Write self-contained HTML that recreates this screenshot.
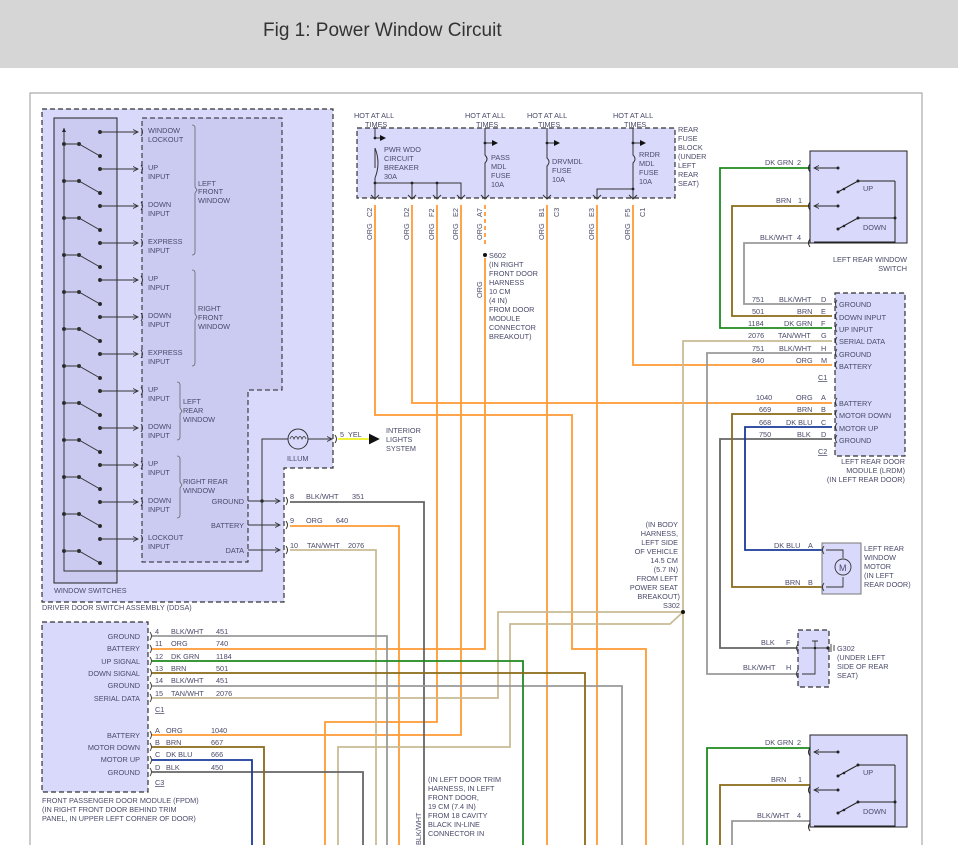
<!DOCTYPE html>
<html><head><meta charset="utf-8"><style>
html,body{margin:0;padding:0;background:#fff;width:958px;height:845px;overflow:hidden}
.hdr{position:absolute;left:0;top:0;width:958px;height:68px;background:#d6d6d6}
.hdr span{position:absolute;left:263px;top:20px;font:19px "Liberation Sans",sans-serif;color:#333}
svg{position:absolute;left:0;top:0}
text{font-family:"Liberation Sans",sans-serif;font-size:7.3px;fill:#4a4a6a}
</style></head><body>
<div class="hdr"><span>Fig 1: Power Window Circuit</span></div>
<svg width="958" height="845" viewBox="0 0 958 845">
<defs><marker id="ar" markerWidth="6" markerHeight="6" refX="5" refY="3" orient="auto"><path d="M0,0.5 L5,3 L0,5.5" fill="none" stroke="#333" stroke-width="0.9"/></marker>
<marker id="af" markerWidth="6" markerHeight="6" refX="5" refY="3" orient="auto"><path d="M0,0 L6,3 L0,6z" fill="#111"/></marker></defs>
<!-- frame -->
<path d="M30,845 V93 H922 V845" fill="none" stroke="#aaa" stroke-width="1.2"/>

<!-- DDSA -->
<path d="M42,109 H333 V468 H284 V602 H42 Z" fill="#d9d9fb" stroke="#333" stroke-width="1.2" stroke-dasharray="5,3"/>
<rect x="54" y="118" width="63" height="465" fill="#cbcbf2" stroke="#222" stroke-width="1"/>
<path d="M142,118 H282 V390 H248 V562 H142 Z" fill="#cbcbf2" stroke="#222" stroke-width="1" stroke-dasharray="5,3"/>
<path d="M64,128 V571 H262 V439 H288" fill="none" stroke="#333" stroke-width="1"/>
<path d="M64,128 l-2,4 h4z" fill="#222"/>
<g stroke="#333" stroke-width="1" fill="#222">
<g id="sw"><circle cx="64" cy="144" r="1.5"/><circle cx="79" cy="144" r="1.5"/><path d="M64,144 H79 L100,156" fill="none"/><circle cx="100" cy="156" r="1.5"/>
<circle cx="100" cy="132" r="1.5"/><path d="M100,132 H138" fill="none" marker-end="url(#ar)"/><path d="M141,128 q3,4 0,8" fill="none"/></g>
<use href="#sw" y="37"/><use href="#sw" y="74"/><use href="#sw" y="111"/><use href="#sw" y="148"/><use href="#sw" y="185"/><use href="#sw" y="222"/><use href="#sw" y="259"/><use href="#sw" y="296"/><use href="#sw" y="333"/><use href="#sw" y="370"/><use href="#sw" y="407"/>
</g>
<g>
<text x="148" y="133">WINDOW</text><text x="148" y="142">LOCKOUT</text>
<text x="148" y="170">UP</text><text x="148" y="179">INPUT</text>
<text x="148" y="207">DOWN</text><text x="148" y="216">INPUT</text>
<text x="148" y="244">EXPRESS</text><text x="148" y="253">INPUT</text>
<text x="148" y="281">UP</text><text x="148" y="290">INPUT</text>
<text x="148" y="318">DOWN</text><text x="148" y="327">INPUT</text>
<text x="148" y="355">EXPRESS</text><text x="148" y="364">INPUT</text>
<text x="148" y="392">UP</text><text x="148" y="401">INPUT</text>
<text x="148" y="429">DOWN</text><text x="148" y="438">INPUT</text>
<text x="148" y="466">UP</text><text x="148" y="475">INPUT</text>
<text x="148" y="503">DOWN</text><text x="148" y="512">INPUT</text>
<text x="148" y="540">LOCKOUT</text><text x="148" y="549">INPUT</text>
<text x="198" y="186">LEFT</text><text x="198" y="194">FRONT</text><text x="198" y="203">WINDOW</text>
<text x="198" y="311">RIGHT</text><text x="198" y="320">FRONT</text><text x="198" y="329">WINDOW</text>
<text x="183" y="404">LEFT</text><text x="183" y="413">REAR</text><text x="183" y="422">WINDOW</text>
<text x="183" y="484">RIGHT REAR</text><text x="183" y="493">WINDOW</text>
<text x="244" y="504" text-anchor="end">GROUND</text><text x="244" y="528" text-anchor="end">BATTERY</text><text x="244" y="553" text-anchor="end">DATA</text>
<text x="54" y="593">WINDOW SWITCHES</text>
<text x="42" y="610">DRIVER DOOR SWITCH ASSEMBLY (DDSA)</text>
</g>
<g fill="none" stroke="#666" stroke-width="0.8">
<path d="M192,125 q3,0 3,3 V187 l2,3 l-2,3 V252 q0,3 -3,3"/>
<path d="M192,270 q3,0 3,3 V314 l2,3 l-2,3 V363 q0,3 -3,3"/>
<path d="M177,382 q3,0 3,3 V408 l2,3 l-2,3 V437 q0,3 -3,3"/>
<path d="M177,456 q3,0 3,3 V482 l2,3 l-2,3 V515 q0,3 -3,3"/>
</g>
<!-- illum -->
<circle cx="298" cy="439" r="10" fill="none" stroke="#333"/>
<path d="M290,439 q2,-5 4,0 q2,-5 4,0 q2,-5 4,0 q2,-5 4,0" fill="none" stroke="#333" stroke-width="0.8"/>
<path d="M308,439 H332" stroke="#333" marker-end="url(#ar)"/>
<path d="M335,435 q3,4 0,8" fill="none" stroke="#333"/>
<text x="287" y="461">ILLUM</text>
<text x="340" y="437">5</text><text x="348" y="437">YEL</text>
<path d="M338,439 H378" stroke="#eeee22" stroke-width="1.8" marker-end="url(#af)"/>
<text x="386" y="433">INTERIOR</text><text x="386" y="442">LIGHTS</text><text x="386" y="451">SYSTEM</text>
<!-- ddsa out pins -->
<g stroke="#333" stroke-width="1" fill="none">
<path d="M248,501 H280" marker-end="url(#ar)"/><circle cx="262" cy="501" r="1.3" fill="#222"/>
<path d="M248,525 H280" marker-end="url(#ar)"/><path d="M248,550 H280" marker-end="url(#ar)"/>
<path d="M286,497 q3,4 0,8 M286,521 q3,4 0,8 M286,546 q3,4 0,8"/>
</g>
<text x="290" y="499">8</text><text x="306" y="499">BLK/WHT</text><text x="352" y="499">351</text>
<text x="290" y="523">9</text><text x="306" y="523">ORG</text><text x="336" y="523">640</text>
<text x="290" y="548">10</text><text x="307" y="548">TAN/WHT</text><text x="348" y="548">2076</text>

<!-- wires -->
<g fill="none" stroke-width="1.8">
<!-- orange -->
<g stroke="#ff9a33">
<path d="M375,205 V415 H572 V649 H646 V845"/>
<path d="M412,205 V403 H832"/>
<path d="M437,205 V722 H325 V845"/>
<path d="M461,205 V735 H152"/>
<path d="M485,205 V245" stroke-dasharray="4,3"/>
<path d="M485,258 V649 H152"/>
<path d="M547,205 V845"/>
<path d="M597,205 V845"/>
<path d="M633,205 V365 H832"/>
<path d="M290,526 H399 V845"/>
</g>
<!-- tan -->
<g stroke="#c9bb95">
<path d="M290,550 H376 V845"/>
<path d="M832,341 H683 V845"/>
<path d="M683,612 H498 V698 H152"/>
<path d="M683,612 L670,624 H510 V747 H338 V845"/>
</g>
<!-- gray -->
<path d="M290,502 H424 V845" stroke="#666"/>
<path d="M152,636 H387 V845" stroke="#999"/>
<path d="M152,686 H622 V845" stroke="#999"/>
<path d="M832,353 H707 V674 H800" stroke="#999"/>
<path d="M810,243 H744 V304 H832" stroke="#999"/>
<path d="M832,439 H720 V648 H800" stroke="#666"/>
<path d="M810,821 H732 V845" stroke="#999"/>
<path d="M152,772 H363 V845" stroke="#666"/>
<!-- green -->
<path d="M152,661 H523 V845" stroke="#1e8a1e"/>
<path d="M810,168 H720 V328 H832" stroke="#1e8a1e"/>
<path d="M810,748 H707 V845" stroke="#1e8a1e"/>
<!-- brown -->
<path d="M152,673 H585 V845" stroke="#8a6a18"/>
<path d="M810,206 H732 V316 H832" stroke="#8a6a18"/>
<path d="M832,414 H732 V587 H822" stroke="#8a6a18"/>
<path d="M152,747 H264 V845" stroke="#8a6a18"/>
<path d="M810,785 H720 V845" stroke="#8a6a18"/>
<!-- blue -->
<path d="M832,427 H745 V550 H822" stroke="#1a3a9a"/>
<path d="M152,760 H252 V845" stroke="#1a3a9a"/>
</g>
<circle cx="485" cy="255" r="2" fill="#111"/>
<circle cx="683" cy="612" r="2" fill="#111"/>

<!-- fuse block -->
<rect x="357" y="128" width="318" height="70" fill="#d9d9fb" stroke="#333" stroke-width="1.2" stroke-dasharray="5,3"/>
<g stroke="#333" stroke-width="1" fill="none">
<path d="M375,128 V138 M375,148 V168 M375,178 V198"/><path d="M375,148 q6,15 0,30"/>
<path d="M375,138 H385" marker-end="url(#af)"/>
<path d="M375,183 H461 V198 M412,183 V198 M437,183 V198"/>
<path d="M485,128 V155 q4,4 0,8 V198 M485,143 H497" /><path d="M485,143 H497" marker-end="url(#af)"/>
<path d="M547,128 V158 q4,4 0,8 V198"/><path d="M547,143 H559" marker-end="url(#af)"/>
<path d="M633,128 V155 q4,4 0,8 V198 M633,189 H597 V198"/><path d="M633,143 H645" marker-end="url(#af)"/>
<path d="M371,195 l4,4 l4,-4 M408,195 l4,4 l4,-4 M433,195 l4,4 l4,-4 M457,195 l4,4 l4,-4 M481,195 l4,4 l4,-4 M543,195 l4,4 l4,-4 M593,195 l4,4 l4,-4 M629,195 l4,4 l4,-4"/>
</g>
<g fill="#222"><circle cx="375" cy="138" r="1.4"/><circle cx="375" cy="183" r="1.4"/><circle cx="412" cy="183" r="1.4"/><circle cx="437" cy="183" r="1.4"/><circle cx="485" cy="143" r="1.4"/><circle cx="547" cy="143" r="1.4"/><circle cx="633" cy="143" r="1.4"/><circle cx="633" cy="189" r="1.4"/></g>
<text x="354" y="118">HOT AT ALL</text><text x="365" y="127">TIMES</text>
<text x="465" y="118">HOT AT ALL</text><text x="476" y="127">TIMES</text>
<text x="527" y="118">HOT AT ALL</text><text x="538" y="127">TIMES</text>
<text x="613" y="118">HOT AT ALL</text><text x="624" y="127">TIMES</text>
<text x="384" y="152">PWR WDO</text><text x="384" y="161">CIRCUIT</text><text x="384" y="170">BREAKER</text><text x="384" y="179">30A</text>
<text x="491" y="160">PASS</text><text x="491" y="169">MDL</text><text x="491" y="178">FUSE</text><text x="491" y="187">10A</text>
<text x="552" y="164">DRVMDL</text><text x="552" y="173">FUSE</text><text x="552" y="182">10A</text>
<text x="639" y="157">RRDR</text><text x="639" y="166">MDL</text><text x="639" y="175">FUSE</text><text x="639" y="184">10A</text>
<text x="678" y="132">REAR</text><text x="678" y="141">FUSE</text><text x="678" y="150">BLOCK</text><text x="678" y="159">(UNDER</text><text x="678" y="168">LEFT</text><text x="678" y="177">REAR</text><text x="678" y="186">SEAT)</text>
<g>
<text transform="translate(372,217) rotate(-90)">C2</text><text transform="translate(409,217) rotate(-90)">D2</text>
<text transform="translate(434,217) rotate(-90)">F2</text><text transform="translate(458,217) rotate(-90)">E2</text>
<text transform="translate(482,217) rotate(-90)">A7</text><text transform="translate(544,217) rotate(-90)">B1</text>
<text transform="translate(559,217) rotate(-90)">C3</text><text transform="translate(594,217) rotate(-90)">E3</text>
<text transform="translate(630,217) rotate(-90)">F5</text><text transform="translate(645,217) rotate(-90)">C1</text>
<text transform="translate(372,240) rotate(-90)">ORG</text><text transform="translate(409,240) rotate(-90)">ORG</text>
<text transform="translate(434,240) rotate(-90)">ORG</text><text transform="translate(458,240) rotate(-90)">ORG</text>
<text transform="translate(482,240) rotate(-90)">ORG</text><text transform="translate(544,240) rotate(-90)">ORG</text>
<text transform="translate(594,240) rotate(-90)">ORG</text><text transform="translate(630,240) rotate(-90)">ORG</text>
<text transform="translate(482,298) rotate(-90)">ORG</text>
<text transform="translate(421,845) rotate(-90)">BLK/WHT</text>
</g>
<text x="489" y="258">S602</text><text x="489" y="267">(IN RIGHT</text><text x="489" y="276">FRONT DOOR</text><text x="489" y="285">HARNESS</text><text x="489" y="294">10 CM</text><text x="489" y="303">(4 IN)</text><text x="489" y="312">FROM DOOR</text><text x="489" y="321">MODULE</text><text x="489" y="330">CONNECTOR</text><text x="489" y="339">BREAKOUT)</text>
<g text-anchor="end">
<text x="678" y="527">(IN BODY</text><text x="678" y="536">HARNESS,</text><text x="678" y="545">LEFT SIDE</text><text x="678" y="554">OF VEHICLE</text><text x="678" y="563">14.5 CM</text><text x="678" y="572">(5.7 IN)</text><text x="678" y="581">FROM LEFT</text><text x="678" y="590">POWER SEAT</text><text x="680" y="599">BREAKOUT)</text><text x="680" y="608">S302</text>
</g>
<text x="428" y="782">(IN LEFT DOOR TRIM</text><text x="428" y="791">HARNESS, IN LEFT</text><text x="428" y="800">FRONT DOOR,</text><text x="428" y="809">19 CM (7.4 IN)</text><text x="428" y="818">FROM 18 CAVITY</text><text x="428" y="827">BLACK IN-LINE</text><text x="428" y="836">CONNECTOR IN</text>

<!-- FPDM -->
<rect x="42" y="622" width="106" height="170" fill="#d9d9fb" stroke="#333" stroke-width="1.2" stroke-dasharray="5,3"/>
<g text-anchor="end">
<text x="140" y="639">GROUND</text><text x="140" y="651">BATTERY</text><text x="140" y="664">UP SIGNAL</text><text x="140" y="676">DOWN SIGNAL</text><text x="140" y="688">GROUND</text><text x="140" y="701">SERIAL DATA</text>
<text x="140" y="738">BATTERY</text><text x="140" y="750">MOTOR DOWN</text><text x="140" y="762">MOTOR UP</text><text x="140" y="775">GROUND</text>
</g>
<g fill="none" stroke="#333" stroke-width="0.9"><path d="M150,632 q3,4 0,8 M150,645 q3,4 0,8 M150,657 q3,4 0,8 M150,669 q3,4 0,8 M150,682 q3,4 0,8 M150,694 q3,4 0,8 M150,731 q3,4 0,8 M150,743 q3,4 0,8 M150,756 q3,4 0,8 M150,768 q3,4 0,8"/></g>
<text x="155" y="634">4</text><text x="171" y="634">BLK/WHT</text><text x="216" y="634">451</text>
<text x="155" y="646">11</text><text x="171" y="646">ORG</text><text x="216" y="646">740</text>
<text x="155" y="659">12</text><text x="171" y="659">DK GRN</text><text x="216" y="659">1184</text>
<text x="155" y="671">13</text><text x="171" y="671">BRN</text><text x="216" y="671">501</text>
<text x="155" y="683">14</text><text x="171" y="683">BLK/WHT</text><text x="216" y="683">451</text>
<text x="155" y="696">15</text><text x="171" y="696">TAN/WHT</text><text x="216" y="696">2076</text>
<text x="155" y="712" text-decoration="underline">C1</text>
<text x="155" y="733">A</text><text x="166" y="733">ORG</text><text x="211" y="733">1040</text>
<text x="155" y="745">B</text><text x="166" y="745">BRN</text><text x="211" y="745">667</text>
<text x="155" y="757">C</text><text x="166" y="757">DK BLU</text><text x="211" y="757">666</text>
<text x="155" y="770">D</text><text x="166" y="770">BLK</text><text x="211" y="770">450</text>
<text x="155" y="785" text-decoration="underline">C3</text>
<text x="42" y="803">FRONT PASSENGER DOOR MODULE (FPDM)</text><text x="42" y="812">(IN RIGHT FRONT DOOR BEHIND TRIM</text><text x="42" y="821">PANEL, IN UPPER LEFT CORNER OF DOOR)</text>

<!-- LR window switch -->
<g id="rsw">
<rect x="810" y="151" width="97" height="92" fill="#d9d9fb" stroke="#222" stroke-width="1"/>
<g stroke="#222" stroke-width="1" fill="none">
<path d="M838,168 H814" marker-end="url(#ar)"/><path d="M838,206 H814" marker-end="url(#ar)"/>
<path d="M895,181 H858 M838,192 L858,181 M858,218 H895 M838,229 L858,218 M895,181 V242 H814"/>
<path d="M810,164 q-3,4 0,8 M810,202 q-3,4 0,8 M810,239 q-3,4 0,8"/>
</g>
<g fill="#222"><circle cx="838" cy="168" r="1.5"/><circle cx="838" cy="206" r="1.5"/><circle cx="838" cy="192" r="1.5"/><circle cx="844" cy="189" r="1.3"/><circle cx="858" cy="181" r="1.5"/><circle cx="838" cy="229" r="1.5"/><circle cx="844" cy="226" r="1.3"/><circle cx="858" cy="218" r="1.5"/><circle cx="895" cy="218" r="1.5"/></g>
<text x="863" y="191">UP</text><text x="863" y="230">DOWN</text>
</g>
<use href="#rsw" y="584"/>
<text x="765" y="165">DK GRN</text><text x="797" y="165">2</text>
<text x="776" y="203">BRN</text><text x="798" y="203">1</text>
<text x="760" y="240">BLK/WHT</text><text x="797" y="240">4</text>
<text x="765" y="745">DK GRN</text><text x="797" y="745">2</text>
<text x="771" y="782">BRN</text><text x="798" y="782">1</text>
<text x="757" y="818">BLK/WHT</text><text x="797" y="818">4</text>
<g text-anchor="end"><text x="907" y="262">LEFT REAR WINDOW</text><text x="907" y="271">SWITCH</text></g>

<!-- LRDM -->
<rect x="835" y="293" width="70" height="163" fill="#d9d9fb" stroke="#333" stroke-width="1.2" stroke-dasharray="5,3"/>
<g fill="none" stroke="#333" stroke-width="0.9"><path d="M837,300 q-3,4 0,8 M837,312 q-3,4 0,8 M837,324 q-3,4 0,8 M837,337 q-3,4 0,8 M837,349 q-3,4 0,8 M837,361 q-3,4 0,8 M837,398 q-3,4 0,8 M837,410 q-3,4 0,8 M837,423 q-3,4 0,8 M837,435 q-3,4 0,8"/></g>
<g>
<text x="839" y="307">GROUND</text><text x="839" y="320">DOWN INPUT</text><text x="839" y="332">UP INPUT</text><text x="839" y="344">SERIAL DATA</text><text x="839" y="357">GROUND</text><text x="839" y="369">BATTERY</text>
<text x="839" y="406">BATTERY</text><text x="839" y="418">MOTOR DOWN</text><text x="839" y="431">MOTOR UP</text><text x="839" y="443">GROUND</text>
<text x="752" y="302">751</text><text x="779" y="302">BLK/WHT</text><text x="821" y="302">D</text>
<text x="752" y="314">501</text><text x="797" y="314">BRN</text><text x="821" y="314">E</text>
<text x="748" y="326">1184</text><text x="784" y="326">DK GRN</text><text x="821" y="326">F</text>
<text x="748" y="338">2076</text><text x="778" y="338">TAN/WHT</text><text x="821" y="338">G</text>
<text x="752" y="351">751</text><text x="779" y="351">BLK/WHT</text><text x="821" y="351">H</text>
<text x="752" y="363">840</text><text x="796" y="363">ORG</text><text x="821" y="363">M</text>
<text x="818" y="380" text-decoration="underline">C1</text>
<text x="756" y="400">1040</text><text x="796" y="400">ORG</text><text x="821" y="400">A</text>
<text x="759" y="412">669</text><text x="797" y="412">BRN</text><text x="821" y="412">B</text>
<text x="759" y="425">668</text><text x="786" y="425">DK BLU</text><text x="821" y="425">C</text>
<text x="759" y="437">750</text><text x="797" y="437">BLK</text><text x="821" y="437">D</text>
<text x="818" y="454" text-decoration="underline">C2</text>
</g>
<g text-anchor="end"><text x="905" y="464">LEFT REAR DOOR</text><text x="905" y="473">MODULE (LRDM)</text><text x="905" y="482">(IN LEFT REAR DOOR)</text></g>

<!-- motor -->
<rect x="822" y="543" width="39" height="51" fill="#d9d9fb" stroke="#777" stroke-width="1"/>
<g fill="none" stroke="#333" stroke-width="0.9">
<path d="M826,550 H843 V558 M843,577 V587 H826 M824,546 q-3,4 0,8 M824,583 q-3,4 0,8"/>
<circle cx="843" cy="567" r="8"/>
</g>
<text x="839" y="571" style="font-size:9px">M</text>
<text x="774" y="548">DK BLU</text><text x="808" y="548">A</text>
<text x="785" y="585">BRN</text><text x="808" y="585">B</text>
<text x="864" y="551">LEFT REAR</text><text x="864" y="560">WINDOW</text><text x="864" y="569">MOTOR</text><text x="864" y="578">(IN LEFT</text><text x="864" y="587">REAR DOOR)</text>

<!-- G302 -->
<rect x="798" y="630" width="31" height="57" fill="#d9d9fb" stroke="#333" stroke-width="1.2" stroke-dasharray="5,3"/>
<g fill="none" stroke="#333" stroke-width="0.9">
<path d="M802,648 H829 M815,641 V674 H802 M812,641 h6 M831,644 v8 M834,645 v6 M798,644 q-3,4 0,8 M798,670 q-3,4 0,8"/>
</g>
<circle cx="815" cy="648" r="1.3" fill="#222"/><circle cx="828" cy="648" r="1.6" fill="#222"/>
<text x="761" y="645">BLK</text><text x="786" y="645">F</text>
<text x="743" y="670">BLK/WHT</text><text x="786" y="670">H</text>
<text x="837" y="651">G302</text><text x="837" y="660">(UNDER LEFT</text><text x="837" y="669">SIDE OF REAR</text><text x="837" y="678">SEAT)</text>
</svg>
</body></html>
